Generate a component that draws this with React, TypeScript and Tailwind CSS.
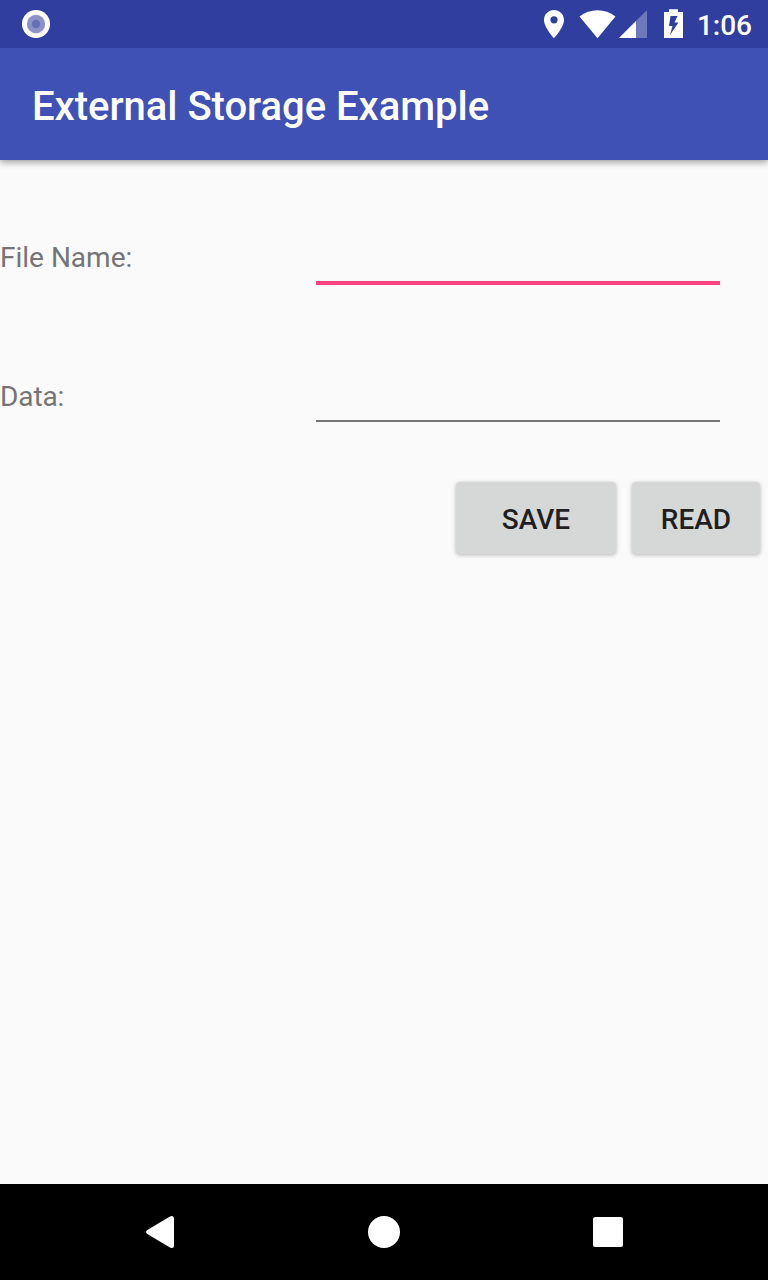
import React from "react";

function StatusBar() {
  return (
    <header className="relative z-20 flex h-12 items-center justify-between bg-[#303f9f] pl-[21px] pr-4 text-white">
      <svg width="30" height="30" viewBox="0 0 30 30">
        <circle cx="15" cy="15" r="14" fill="#fff" />
        <circle cx="15" cy="15" r="9.2" fill="#8b93ca" />
        <circle cx="15" cy="15" r="4.2" fill="#6470b8" />
      </svg>
      <div className="flex items-center">
        <svg width="146" height="48" viewBox="540 0 146 48" fill="#fff">
          <path fillRule="evenodd" d="M554 10c-5.600 0-10 4.400-10 10 0 7.500 10 18.200 10 18.200s10-10.700 10-18.200c0-5.600-4.400-10-10-10zm0 6.200a3.600 3.600 0 1 1 0 7.200 3.600 3.600 0 0 1 0-7.200z" />
          <path d="M579.500 16.500C590 8 605 8 615.500 16.500L597.500 38.300z" />
          <path d="M647 10v28h-28z" fillOpacity=".3" />
          <path d="M636 21v17h-17z" />
          <path fillRule="evenodd" d="M669 9.300h9V12h5v26h-19V12h5zM670.500 16l-1.500 10h3.500l-2.500 9 8.500-12.500h-4l3-6.500z" />
        </svg>
        <time className="ml-[11px] mt-[4px] text-[28px] leading-8 font-medium">1:06</time>
      </div>
    </header>
  );
}

export default function App() {
  return (
    <div className="flex h-[1280px] w-[768px] flex-col overflow-hidden bg-[#fafafa] font-['Roboto',sans-serif]">
      <StatusBar />
      <div className="z-10 flex h-28 items-center bg-[#3f51b5] pl-8 pt-[6px] text-[40px] font-medium text-white shadow-[0_2px_7px_rgba(0,0,0,0.4)]">
        <h1 className="tracking-[-0.02px]">External Storage Example</h1>
      </div>
      <main className="flex-1 pt-16 text-[28px] text-[#757575]">
        <label className="flex h-[61px] items-start">
          <span className="w-[316px] pt-[13px]">File Name:</span>
          <input className="h-[61px] w-[404px] border-b-4 border-[#ff4081] bg-transparent outline-none" />
        </label>
        <label className="mt-[78px] flex h-[59px] items-start">
          <span className="w-[316px] pt-[13px] tracking-[-0.1px]">Data:</span>
          <input className="h-[59px] w-[404px] border-b-2 border-[#757575] bg-transparent outline-none" />
        </label>
        <div className="mt-[60px] flex justify-end gap-4 pr-2 font-medium text-[#1f1f1f]">
          <button className="h-[72px] w-40 rounded-[4px] bg-[#d6d7d7] pt-[4px] shadow-[0_1px_4px_rgba(0,0,0,0.28)]">SAVE</button>
          <button className="h-[72px] w-32 rounded-[4px] bg-[#d6d7d7] pt-[4px] shadow-[0_1px_4px_rgba(0,0,0,0.28)]">READ</button>
        </div>
      </main>
      <nav className="flex h-24 items-center justify-center gap-48 bg-black">
        <svg width="32" height="34" viewBox="0 0 32 34" fill="#fff"><path d="M3.300 15.100L26 1.500Q30-.2 30 3.500v27q0 3.700-4 2L3.300 18.900q-2.600-1.900 0-3.800z" /></svg>
        <svg width="32" height="32" viewBox="0 0 32 32" fill="#fff"><circle cx="16" cy="16" r="16" /></svg>
        <svg width="32" height="32" viewBox="0 0 32 32" fill="#fff"><rect x="1" y="1" width="30" height="30" rx="2.500" /></svg>
      </nav>
    </div>
  );
}
